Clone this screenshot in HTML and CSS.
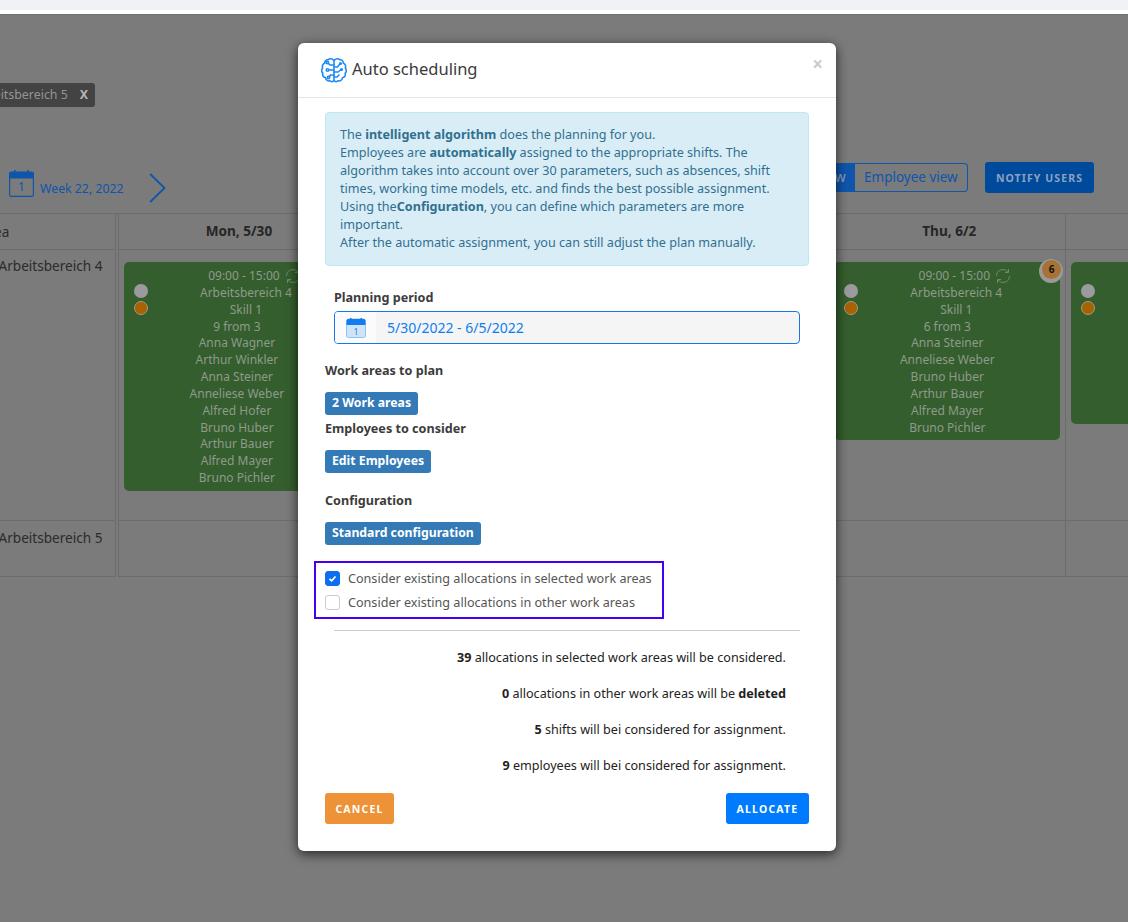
FILE: index.html
```html
<!DOCTYPE html>
<html lang="en">
<head>
<meta charset="utf-8">
<title>Auto scheduling</title>
<link rel="stylesheet" href="styles.css">
</head>
<body>
<div class="topbar"></div>
<main class="stage">
  <div class="chip-row"><span class="chip">Arbeitsbereich 5 <b class="chip-x">X</b></span></div>
  <div class="toolbar">
    <div class="week">
      <svg class="week-cal" viewBox="0 0 25 27"><rect x="0.6" y="2" width="23.8" height="24.4" rx="1.5" fill="none" stroke="#0f55ab" stroke-width="1.2"/><path d="M0.6 8.5V3.5A1.5 1.5 0 0 1 2 2H23A1.5 1.5 0 0 1 24.4 3.5V8.5Z" fill="#0f55ab"/><rect x="5" y="0" width="1.6" height="4" fill="#0f55ab"/><rect x="18.4" y="0" width="1.6" height="4" fill="#0f55ab"/><text x="12.5" y="21" text-anchor="middle" class="cal-num">1</text></svg>
      <span class="week-label">Week 22, 2022</span>
      <svg class="chevron" viewBox="0 0 17 30"><path d="M1.2 1L15.5 15L1.2 29" fill="none" stroke="#0f55ab" stroke-width="1.8"/></svg>
    </div>
    <div class="toggle"><span class="toggle-on">w</span><span class="toggle-off">Employee view</span></div>
    <span class="notify">NOTIFY USERS</span>
  </div>
  <div class="board">
    <div class="row row-head">
      <div class="area">Area</div><div class="day">Mon, 5/30</div><div class="day"></div><div class="day"></div><div class="day">Thu, 6/2</div><div class="day"></div>
    </div>
    <div class="row row-one">
      <div class="area area-name">Arbeitsbereich 4</div>
      <div class="slot">
        <div class="card">
          <i class="dot dot-grey"></i><i class="dot dot-orange"></i>
          <div class="line shift shift-time"><span>09:00 - 15:00</span><svg class="sync" viewBox="0 0 18 18"><path d="M2.5 9A6.5 6.5 0 0 1 14 4.8M15.5 9A6.5 6.5 0 0 1 4 13.2M14.5 2V5.5H11M3.5 16V12.5H7" fill="none" stroke="#73886e" stroke-width="1"/></svg></div>
          <div class="line shift">Arbeitsbereich 4</div>
          <div class="line shift">Skill 1</div>
          <div class="line count">9 from 3</div>
          <div class="line name">Anna Wagner</div><div class="line name">Arthur Winkler</div><div class="line name">Anna Steiner</div><div class="line name">Anneliese Weber</div><div class="line name">Alfred Hofer</div><div class="line name">Bruno Huber</div><div class="line name">Arthur Bauer</div><div class="line name">Alfred Mayer</div><div class="line name">Bruno Pichler</div>
        </div>
      </div>
      <div class="slot"></div><div class="slot"></div>
      <div class="slot">
        <div class="card">
          <i class="dot dot-grey"></i><i class="dot dot-orange"></i>
          <span class="badge"><span class="badge-in">6</span></span>
          <div class="line shift shift-time"><span>09:00 - 15:00</span><svg class="sync" viewBox="0 0 18 18"><path d="M2.5 9A6.5 6.5 0 0 1 14 4.8M15.5 9A6.5 6.5 0 0 1 4 13.2M14.5 2V5.5H11M3.5 16V12.5H7" fill="none" stroke="#73886e" stroke-width="1"/></svg></div>
          <div class="line shift">Arbeitsbereich 4</div>
          <div class="line shift">Skill 1</div>
          <div class="line count">6 from 3</div>
          <div class="line name">Anna Steiner</div><div class="line name">Anneliese Weber</div><div class="line name">Bruno Huber</div><div class="line name">Arthur Bauer</div><div class="line name">Alfred Mayer</div><div class="line name">Bruno Pichler</div>
        </div>
      </div>
      <div class="slot slot-last">
        <div class="card card-short"><i class="dot dot-grey"></i><i class="dot dot-orange"></i></div>
      </div>
    </div>
    <div class="row row-two">
      <div class="area area-name">Arbeitsbereich 5</div><div class="slot"></div><div class="slot"></div><div class="slot"></div><div class="slot"></div><div class="slot"></div>
    </div>
  </div>

  <div class="backdrop">
    <section class="modal">
      <header class="modal-head">
        <svg class="brain" viewBox="0 0 26 26" fill="none" stroke="#1f8bf5" stroke-width="1.6" stroke-linecap="round" stroke-linejoin="round">
          <path d="M12.6 3.2C11.5 1.5 8.5 1.2 7.2 2.8C5.2 2.5 3.6 4 3.8 6C1.8 6.8 0.8 9 1.7 11C0.3 12.5 0.4 15 1.8 16.2C1.2 18.5 2.5 20.5 4.5 20.8C4.8 23 7 24.5 9 23.8C10.2 25 12 24.8 12.8 23.6"/>
          <path d="M13.4 3.2C14.5 1.5 17.5 1.2 18.8 2.8C20.8 2.5 22.4 4 22.2 6C24.2 6.8 25.2 9 24.3 11C25.7 12.5 25.6 15 24.2 16.2C24.8 18.5 23.5 20.5 21.5 20.8C21.2 23 19 24.5 17 23.8C15.8 25 14 24.8 13.2 23.6"/>
          <path d="M13 3.2V23.6"/>
          <path d="M13 8H9L7.5 6.5M13 13H8M13 18H9.5L8.5 19.5"/>
          <circle cx="6.3" cy="5.5" r="1.2"/><circle cx="6.5" cy="13" r="1.3"/><circle cx="7.5" cy="20.5" r="1.2"/>
          <path d="M13 10H16.5L18.5 7.5M13 15H17L19.5 13M13 20H16L18 18"/>
          <circle cx="19.5" cy="6.5" r="0.8"/><circle cx="20.5" cy="12.5" r="0.8"/>
        </svg>
        <h1 class="modal-title">Auto scheduling</h1>
        <span class="close">×</span>
      </header>
      <div class="modal-body">
        <div class="alert">The <b>intelligent algorithm</b> does the planning for you.<br>Employees are <b>automatically</b> assigned to the appropriate shifts. The algorithm takes into account over 30 parameters, such as absences, shift times, working time models, etc. and finds the best possible assignment.<br>Using the<b>Configuration</b>, you can define which parameters are more important.<br>After the automatic assignment, you can still adjust the plan manually.</div>
        <div class="period">
          <div class="label">Planning period</div>
          <div class="range">
            <span class="range-icon"><svg class="range-cal" viewBox="0 0 20 20"><rect x="0.5" y="1" width="19" height="18.5" rx="2" fill="#cfe4fb" stroke="#8fc2f8"/><path d="M0.5 7V3A2 2 0 0 1 2.5 1H17.5A2 2 0 0 1 19.5 3V7Z" fill="#0f7df0"/><rect x="4" y="0" width="1.5" height="3" fill="#0f7df0"/><rect x="14.5" y="0" width="1.5" height="3" fill="#0f7df0"/><text x="10" y="16.5" text-anchor="middle" class="range-num">1</text></svg></span>
            <span class="range-text">5/30/2022 - 6/5/2022</span>
          </div>
        </div>
        <div class="label label-first">Work areas to plan</div>
        <span class="pill">2 Work areas</span>
        <div class="label label-tight">Employees to consider</div>
        <span class="pill">Edit Employees</span>
        <div class="label label-loose">Configuration</div>
        <span class="pill">Standard configuration</span>
        <div class="options">
          <label class="option"><span class="box box-on"><svg viewBox="0 0 15 15"><path d="M4 7.8L6.5 10.2L11 5.2" fill="none" stroke="#fff" stroke-width="2"/></svg></span>Consider existing allocations in selected work areas</label>
          <label class="option"><span class="box"></span>Consider existing allocations in other work areas</label>
        </div>
        <div class="summary">
          <p><b>39</b> allocations in selected work areas will be considered.</p>
          <p><b>0</b> allocations in other work areas will be <b>deleted</b></p>
          <p><b>5</b> shifts will bei considered for assignment.</p>
          <p><b>9</b> employees will bei considered for assignment.</p>
        </div>
        <footer class="modal-foot">
          <span class="btn btn-cancel">CANCEL</span>
          <span class="btn btn-allocate">ALLOCATE</span>
        </footer>
      </div>
    </section>
  </div>
</main>
</body>
</html>
```
FILE: styles.css
```css
* { box-sizing: border-box; }
html, body { margin: 0; padding: 0; }
body {
  width: 1128px;
  height: 922px;
  overflow: hidden;
  background: #fff;
  font-family: "Noto Sans", sans-serif;
  font-size: 12.6px;
}
.topbar { height: 14px; background: #fff; border-top: 10px solid #f0f2f5; }
.stage {
  position: relative;
  height: 908px;
  overflow: hidden;
  background: #7b7b7b;
  border-top: 1px solid #6f6f6f;
  color: #2b2b2b;
}
.chip-row { padding-top: 68px; height: 147px; margin-left: -35px; }
.chip {
  display: inline-flex;
  align-items: center;
  gap: 12px;
  height: 24px;
  padding: 0 7px 1px 8px;
  border-radius: 3px;
  background: #434343;
  color: #949494;
  font-size: 12.4px;
  white-space: nowrap;
}
.chip-x { color: #b5b5b5; font-weight: 700; }
.toolbar { display: flex; align-items: flex-start; height: 51px; }
.week { display: flex; align-items: flex-start; width: 835px; padding-left: 9px; margin-top: 8px; }
.week-cal { width: 25px; height: 27px; }
.cal-num { font: 12px "Noto Sans", sans-serif; fill: #0f55ab; }
.week-label { margin: 10px 0 0 6px; color: #0f55ab; font-size: 12.3px; width: 109px; white-space: nowrap; }
.chevron { width: 17px; height: 30px; margin-top: 3px; }
.toggle {
  display: flex;
  height: 29px;
  width: 133px;
  margin-top: 1px;
  border: 1px solid #0f55ab;
  border-left: 0;
  border-radius: 0 4px 4px 0;
  font-size: 13.5px;
  line-height: 26px;
  white-space: nowrap;
}
.toggle-on { width: 20px; background: #0f55ab; color: #8ba3c0; text-align: left; }
.toggle-off { padding-left: 9px; color: #0f55ab; }
.notify {
  width: 109px;
  height: 31px;
  margin-left: 17px;
  border-radius: 3px;
  background: #004a9b;
  color: #8ba3c0;
  font-size: 10.5px;
  font-weight: 700;
  letter-spacing: 1.1px;
  line-height: 32px;
  text-align: center;
  white-space: nowrap;
}
.board { margin-left: -100px; border-top: 1px solid #6c6c6c; width: 1500px; }
.row { display: grid; grid-template-columns: 217px repeat(5, 236.8px); }
.row-head { height: 35px; }
.row-one { height: 272px; }
.row-two { height: 56px; }
.area {
  margin-right: 1px;
  border-right: 1px solid #6c6c6c;
  border-bottom: 1px solid #6c6c6c;
  padding-left: 80px;
  font-size: 13.6px;
  line-height: 35px;
  color: #2b2b2b;
}
.area-name { padding-left: 98.5px; line-height: 33px; white-space: nowrap; }
.day {
  margin-left: 1px;
  margin-right: -1px;
  border-left: 1px solid #6c6c6c;
  border-bottom: 1px solid #6c6c6c;
  padding-left: 4px;
  text-align: center;
  font-size: 13.6px;
  font-weight: 700;
  line-height: 34px;
  color: #262626;
}
.slot {
  margin-left: 1px;
  margin-right: -1px;
  border-left: 1px solid #6c6c6c;
  border-bottom: 1px solid #6c6c6c;
  padding: 13px 5px 0 5px;
}
.card {
  position: relative;
  height: max-content;
  padding: 5px 0 5px;
  border-radius: 5px;
  background: #355e2e;
  color: #8e9a8b;
  font-size: 12px;
  line-height: 17px;
  text-align: center;
  white-space: nowrap;
}
.card-short { height: 162px; }
.line { height: 17px; }
.count { height: 16.4px; }
.name { height: 16.85px; }
.shift { padding-left: 18px; display: flex; justify-content: center; align-items: center; gap: 4px; }
.shift-time { padding-left: 36px; }
.sync { width: 18px; height: 18px; }
.dot {
  position: absolute;
  left: 10px;
  top: 22px;
  width: 14px;
  height: 14px;
  border-radius: 50%;
}
.dot-grey { background: #9b9b9f; }
.dot-orange { top: 39px; background: #a86200; border: 1px solid #a09a8a; }
.badge {
  position: absolute;
  right: -3px;
  top: -3px;
  width: 24px;
  height: 24px;
  padding: 1px 0 0 3px;
  border-radius: 50%;
  background: #9a9a9a;
}
.badge-in {
  display: block;
  width: 19px;
  height: 19px;
  border-radius: 50%;
  background: #a87234;
  color: #111;
  font-size: 10px;
  font-weight: 700;
  line-height: 19px;
}
.backdrop { position: absolute; inset: 0; padding: 28px 0 0 298px; }
.modal {
  width: 538px;
  height: 808px;
  border-radius: 6px;
  background: #fff;
  box-shadow: 0 3px 12px rgba(0, 0, 0, 0.7);
  color: #333;
}
.modal-head {
  display: flex;
  align-items: center;
  height: 55px;
  padding: 0 13px 0 23px;
  border-bottom: 1px solid #e5e5e5;
}
.brain { width: 26px; height: 26px; }
.modal-title { margin: 0 0 4px 5px; font-size: 16.5px; font-weight: 400; color: #3a3a3a; flex: 1; }
.close { align-self: flex-start; margin-top: 9px; font-size: 19px; line-height: 24px; font-weight: 700; color: #ccc; }
.modal-body { padding: 14px 27px 0; }
.alert {
  height: 154px;
  padding: 13px 14px;
  border: 1px solid #bce8f1;
  border-radius: 4px;
  background: #d9edf7;
  color: #31708f;
  font-size: 12.6px;
  line-height: 18px;
}
.period { padding: 23px 9px 0; }
.label { font-size: 12.6px; font-weight: 700; color: #3c3c3c; line-height: 18px; }
.range {
  display: flex;
  align-items: center;
  height: 33px;
  margin-top: 4px;
  border: 1px solid #1478e6;
  border-radius: 4px;
  background: #f5f5f5;
  overflow: hidden;
}
.range-icon { display: flex; align-items: center; height: 100%; width: 41px; padding-left: 11px; background: #fbfbfb; }
.range-cal { width: 20px; height: 20px; }
.range-num { font: 8px "Noto Sans", sans-serif; fill: #0f7df0; }
.range-text { margin-left: 11px; color: #0f7df0; font-size: 14px; }
.label-first { margin-top: 18px; }
.label-tight { margin-top: 5px; }
.label-loose { margin-top: 19px; }
.pill {
  display: block;
  width: max-content;
  height: 23px;
  margin-top: 12px;
  padding: 0 7px;
  border-radius: 3px;
  background: #337ab7;
  color: #fff;
  font-size: 12.25px;
  font-weight: 700;
  line-height: 22px;
}
.options {
  width: 350px;
  height: 58px;
  margin: 16px 0 0 -11px;
  padding: 3px 0 0 9px;
  border: 2px solid #4400f0;
}
.option { display: flex; align-items: center; gap: 8px; height: 24px; color: #555; font-size: 12.6px; white-space: nowrap; }
.box { width: 15px; height: 15px; border: 1px solid #ccc; border-radius: 3px; background: #fff; display: block; }
.box-on { border-color: #0b6ff0; background: #0b6ff0; }
.box-on svg { display: block; width: 13px; height: 13px; }
.summary { margin: 11px 9px 0; padding: 9px 14px 0 0; border-top: 1px solid #ccc; text-align: right; color: #222; }
.summary p { margin: 0; height: 36px; line-height: 36px; }
.modal-foot { display: flex; justify-content: space-between; margin-top: 9px; }
.btn {
  height: 31px;
  border-radius: 3px;
  color: #fff;
  font-size: 10.5px;
  font-weight: 700;
  letter-spacing: 1.2px;
  line-height: 32px;
  text-align: center;
}
.btn-cancel { width: 69px; background: #ed9236; }
.btn-allocate { width: 83px; background: #007bff; }
```
